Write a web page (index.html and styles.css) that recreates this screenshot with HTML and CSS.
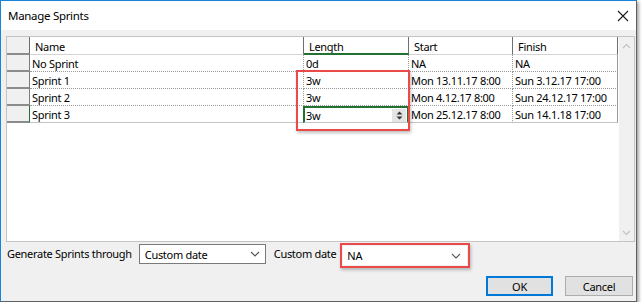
FILE: index.html
```html
<!DOCTYPE html>
<html lang="en">
<head>
    <meta charset="UTF-8">
    <title>Manage Sprints</title>
    <link rel="stylesheet" href="styles.css">
</head>
<body>
    <div class="window">
        <div class="titlebar">
            <span class="title">Manage Sprints</span>
            <svg class="close" width="12" height="12" viewBox="0 0 12 12">
                <path d="M1 1 L11 11 M11 1 L1 11" stroke="#1a1a1a" stroke-width="1.1" fill="none"/>
            </svg>
        </div>

        <div class="client">
            <div class="grid">
                <div class="sheet">
                    <div class="row head">
                        <div class="cell rh"></div>
                        <div class="cell c-name">Name</div>
                        <div class="cell c-len sel-col">Length</div>
                        <div class="cell c-start">Start</div>
                        <div class="cell c-fin">Finish</div>
                    </div>
                    <div class="row">
                        <div class="cell rh"></div>
                        <div class="cell c-name">No Sprint</div>
                        <div class="cell c-len">0d</div>
                        <div class="cell c-start">NA</div>
                        <div class="cell c-fin">NA</div>
                    </div>
                    <div class="row">
                        <div class="cell rh"></div>
                        <div class="cell c-name">Sprint 1</div>
                        <div class="cell c-len">3w</div>
                        <div class="cell c-start">Mon 13.11.17 8:00</div>
                        <div class="cell c-fin">Sun 3.12.17 17:00</div>
                    </div>
                    <div class="row">
                        <div class="cell rh"></div>
                        <div class="cell c-name">Sprint 2</div>
                        <div class="cell c-len">3w</div>
                        <div class="cell c-start">Mon 4.12.17 8:00</div>
                        <div class="cell c-fin">Sun 24.12.17 17:00</div>
                    </div>
                    <div class="row last active">
                        <div class="cell rh"></div>
                        <div class="cell c-name">Sprint 3</div>
                        <div class="cell c-len editing">
                            <span>3w</span>
                            <span class="spin">
                                <svg width="9" height="11" viewBox="0 0 9 11">
                                    <path d="M1.5 4.5 L4.5 1.5 L7.5 4.5 Z M1.5 6.5 L7.5 6.5 L4.5 9.5 Z" fill="#333"/>
                                </svg>
                            </span>
                        </div>
                        <div class="cell c-start">Mon 25.12.17 8:00</div>
                        <div class="cell c-fin">Sun 14.1.18 17:00</div>
                    </div>
                </div>

                <div class="vscroll">
                    <svg width="9" height="6" viewBox="0 0 9 6"><path d="M1 5 L4.5 1.5 L8 5" stroke="#c2c2c2" stroke-width="1.2" fill="none"/></svg>
                    <svg width="9" height="6" viewBox="0 0 9 6"><path d="M1 1 L4.5 4.5 L8 1" stroke="#c2c2c2" stroke-width="1.2" fill="none"/></svg>
                </div>

                <!-- highlight drawn over the Length column -->
                <div class="mark"></div>
            </div>

            <div class="options">
                <span class="label">Generate Sprints through</span>
                <div class="combo combo-through">
                    <span>Custom date</span>
                    <svg width="10" height="6" viewBox="0 0 10 6"><path d="M1 1 L5 5 L9 1" stroke="#555" stroke-width="1.1" fill="none"/></svg>
                </div>
                <span class="label label-date">Custom date</span>
                <div class="hl">
                    <div class="combo combo-date">
                        <span>NA</span>
                        <svg width="10" height="6" viewBox="0 0 10 6"><path d="M1 1 L5 5 L9 1" stroke="#555" stroke-width="1.1" fill="none"/></svg>
                    </div>
                </div>
            </div>

            <div class="buttons">
                <button class="btn btn-ok">OK</button>
                <button class="btn">Cancel</button>
            </div>
        </div>
    </div>
</body>
</html>
```

FILE: styles.css
```css
* {
    box-sizing: border-box;
    margin: 0;
    padding: 0;
}

body {
    background: #ffffff;
    font-family: 'Noto Sans', 'Segoe UI', sans-serif;
    font-size: 11px;
    letter-spacing: -0.3px;
    color: #000;
}

.window {
    width: 637px;
    height: 302px;
    border-left: 1px solid #1883d7;
    border-top: 1px solid #1883d7;
    border-right: 1px solid #5f5f5f;
    border-bottom: 1px solid #5f5f5f;
    box-shadow: 2px 2px 3px rgba(0,0,0,0.35);
    display: flex;
    flex-direction: column;
    background: #f0f0f0;
}

.titlebar {
    height: 29px;
    background: #fff;
    display: flex;
    align-items: center;
    justify-content: space-between;
    padding: 0 7px 0 7px;
    flex-shrink: 0;
}

.title {
    font-size: 11.5px;
}

.client {
    flex: 1;
    padding: 6px 1px 0 5px;
    display: flex;
    flex-direction: column;
}

.grid {
    position: relative;
    height: 206px;
    background: #fff;
    border: 1px solid #c4c4c4;
    display: flex;
}

.sheet {
    width: 611px;
}

.row {
    display: flex;
    height: 17px;
}

.cell {
    height: 17px;
    line-height: 17px;
    padding-left: 2px;
    white-space: nowrap;
    overflow: hidden;
    border-right: 1px dotted #9a9a9a;
    border-bottom: 1px dotted #9a9a9a;
}

.rh {
    width: 23px;
    background: #f0f0f0;
    border-right: 1px solid #7c7c7c;
    border-bottom: 2px solid #8c8c8c;
}

.c-name { width: 274px; }
.c-len { width: 105px; }
.c-start { width: 104px; }
.c-fin { width: 105px; border-right: 1px solid #9a9a9a; }

.head {
    height: 18px;
}

.head .cell {
    height: 18px;
    line-height: 19px;
    padding-left: 5px;
    border-right: 1px solid #6e6e6e;
    border-bottom: 1px solid #d4d4d4;
}

.head .rh {
    border-bottom: 2px solid #8c8c8c;
}

.head .sel-col {
    border-bottom: 2px solid #237033;
}

.last .cell {
    border-bottom: 1px solid #c4c4c4;
}

.last .rh {
    border-bottom: 2px solid #8c8c8c;
}

.active .rh {
    border-right: 1px solid #237033;
}

.editing {
    display: flex;
    align-items: center;
    justify-content: space-between;
    border: 2px solid #237033;
    padding-left: 1px;
    padding-right: 1px;
    margin-left: -1px;
    width: 106px;
}

.spin {
    width: 14px;
    height: 13px;
    background: #e4e4e4;
    display: flex;
    align-items: center;
    justify-content: center;
}

.vscroll {
    margin-left: 1px;
    width: 15px;
    background: #f0f0f0;
    display: flex;
    flex-direction: column;
    justify-content: space-between;
    align-items: center;
    padding: 6px 0 5px;
}

.mark {
    position: absolute;
    left: 289px;
    top: 33px;
    width: 114px;
    height: 61px;
    border: 2px solid #ea4a4a;
    box-shadow: 1px 2px 3px rgba(0,0,0,0.25);
}

.options {
    display: flex;
    align-items: flex-start;
    margin-top: 1px;
}

.label {
    line-height: 20px;
    margin-top: 1px;
    padding-left: 1px;
}

.combo {
    height: 20px;
    background: #fff;
    border: 1px solid #7a7a7a;
    display: flex;
    align-items: center;
    justify-content: space-between;
    padding: 0 5px 0 5px;
}

.combo-through {
    width: 127px;
    margin: 1px 0 0 7px;
}

.label-date {
    margin-left: 7px;
}

.hl {
    margin-left: 4px;
    border: 2px solid #ea4a4a;
    padding: 1px;
    box-shadow: 1px 2px 3px rgba(0,0,0,0.25);
}

.combo-date {
    width: 124px;
    height: 19px;
    border-color: #fff;
    padding-left: 3px;
}

.buttons {
    display: flex;
    justify-content: flex-end;
    gap: 12px;
    margin-top: 8px;
    padding-right: 2px;
}

.btn {
    width: 67px;
    height: 20px;
    font-family: inherit;
    font-size: 11px;
    letter-spacing: -0.3px;
    background: #e1e1e1;
    border: 1px solid #adadad;
}

.btn:last-child {
    width: 68px;
}

.btn-ok {
    border: 2px solid #0078d7;
}
```
